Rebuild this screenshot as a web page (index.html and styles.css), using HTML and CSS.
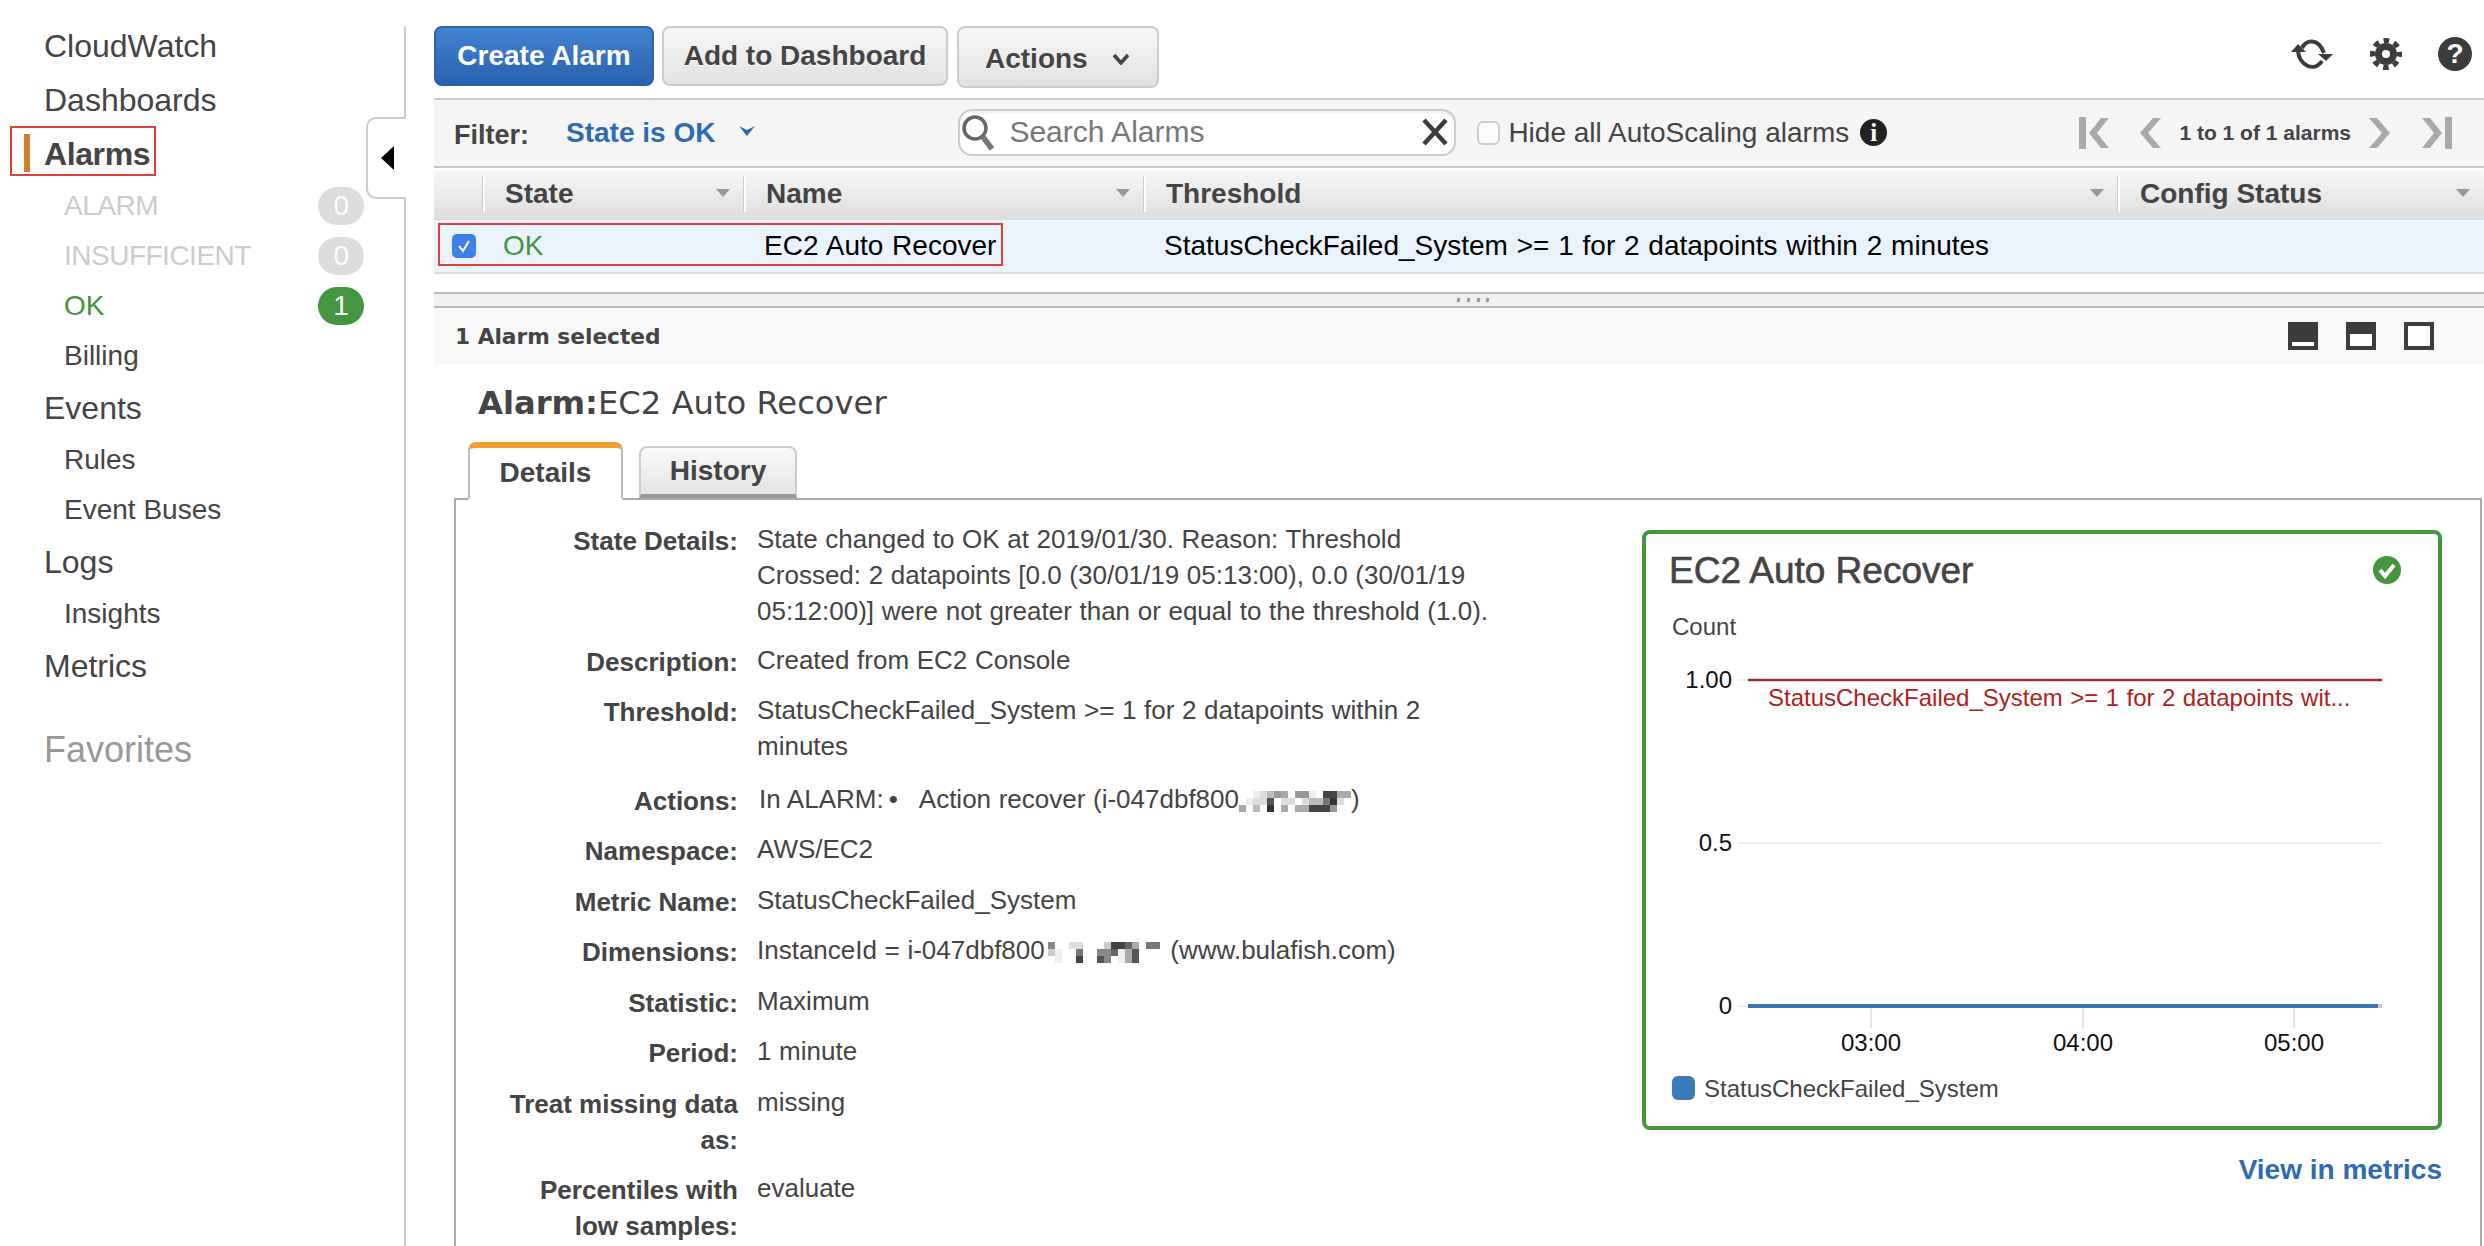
FILE: index.html
```html
<!DOCTYPE html>
<html>
<head>
    <meta name="viewport" content="width=device-width, initial-scale=1.0">
    <title>CloudWatch Alarms</title>
    <link rel="stylesheet" href="styles.css">
</head>
<body>
<div class="page">
    <div class="sidebar">
        <ul class="nav">
            <li class="nav-item">CloudWatch</li>
            <li class="nav-item">Dashboards</li>
            <li class="nav-item nav-active">Alarms</li>
            <li class="nav-sub nav-muted">ALARM <span class="badge">0</span></li>
            <li class="nav-sub nav-muted">INSUFFICIENT <span class="badge">0</span></li>
            <li class="nav-sub nav-ok">OK <span class="badge badge-ok">1</span></li>
            <li class="nav-sub">Billing</li>
            <li class="nav-item">Events</li>
            <li class="nav-sub">Rules</li>
            <li class="nav-sub">Event Buses</li>
            <li class="nav-item">Logs</li>
            <li class="nav-sub">Insights</li>
            <li class="nav-item">Metrics</li>
            <li class="nav-item nav-fav">Favorites</li>
        </ul>
        <div class="collapse-tab"><span class="collapse-arrow"></span></div>
    </div>

    <div class="main">
        <div class="toolbar">
            <button class="btn btn-primary">Create Alarm</button>
            <button class="btn btn-dash">Add to Dashboard</button>
            <button class="btn btn-actions">Actions
                <svg width="18" height="12" viewBox="0 0 18 12"><path d="M2 2 L9 10 L16 2" fill="none" stroke="#444" stroke-width="3.5"/></svg>
            </button>
            <div class="toolbar-icons">
                <svg width="44" height="34" viewBox="0 0 44 34">
                    <path d="M12 11 C16 3 28 0 34 16" fill="none" stroke="#3c3c3c" stroke-width="4"/>
                    <path d="M28 17 L43 17 L36 24 Z" fill="#3c3c3c"/>
                    <path d="M8 14 C9 28 24 36 32 24" fill="none" stroke="#3c3c3c" stroke-width="4"/>
                    <path d="M1 15 L16 15 L8 7 Z" fill="#3c3c3c"/>
                </svg>
                <svg width="32" height="32" viewBox="0 0 32 32">
                    <circle cx="16" cy="16" r="11" fill="#3c3c3c"/>
                    <circle cx="16" cy="16" r="13.5" fill="none" stroke="#3c3c3c" stroke-width="5" stroke-dasharray="5.6 5" stroke-dashoffset="2.8"/>
                    <circle cx="16" cy="16" r="4" fill="#fff"/>
                </svg>
                <span class="icon-help">?</span>
            </div>
        </div>

        <div class="filter-bar">
            <span class="filter-label">Filter:</span>
            <span class="filter-value">State is OK</span>
            <svg class="filter-chevron" width="18" height="12" viewBox="0 0 18 12"><path d="M1 1 L9 11 L17 1 L9 5 Z" fill="#2e6bb0"/></svg>
            <div class="search">
                <svg width="36" height="40" viewBox="0 0 36 40">
                    <circle cx="15" cy="16" r="11" fill="none" stroke="#666" stroke-width="3.5"/>
                    <path d="M23 25 L32 37" stroke="#777" stroke-width="5.5"/>
                </svg>
                <span class="search-text">Search Alarms</span>
                <svg class="search-clear" width="28" height="28" viewBox="0 0 28 28"><path d="M3 2 L25 26 M25 2 L3 26" stroke="#3c3c3c" stroke-width="4.5"/></svg>
            </div>
            <span class="check-empty"></span>
            <span class="hide-label">Hide all AutoScaling alarms</span>
            <span class="icon-info">i</span>
            <div class="pager">
                <svg width="30" height="32" viewBox="0 0 30 32"><path d="M0 0 H7 V32 H0 Z" fill="#aaa"/><path d="M22 1 L10 16 L22 31 L30 31 L18 16 L30 1 Z" fill="#aaa"/></svg>
                <svg class="pager-prev" width="22" height="32" viewBox="0 0 22 32"><path d="M14 1 L1 16 L14 31 L22 31 L9 16 L22 1 Z" fill="#aaa"/></svg>
                <span class="pager-text">1 to 1 of 1 alarms</span>
                <svg class="pager-next" width="22" height="32" viewBox="0 0 22 32"><path d="M8 1 L21 16 L8 31 L0 31 L13 16 L0 1 Z" fill="#aaa"/></svg>
                <svg class="pager-last" width="30" height="32" viewBox="0 0 30 32"><path d="M30 0 H23 V32 H30 Z" fill="#aaa"/><path d="M8 1 L20 16 L8 31 L0 31 L12 16 L0 1 Z" fill="#aaa"/></svg>
            </div>
        </div>

        <div class="table-head">
            <div class="th th-check"></div>
            <div class="th th-state">State<span class="sort"></span></div>
            <div class="th th-name">Name<span class="sort"></span></div>
            <div class="th th-threshold">Threshold<span class="sort"></span></div>
            <div class="th th-config">Config Status<span class="sort"></span></div>
        </div>
        <div class="table-row">
            <div class="td th-check"><span class="check-on"><svg width="14" height="14" viewBox="0 0 14 14"><path d="M2 7 L6 12 L12 2" fill="none" stroke="#fff" stroke-width="2"/></svg></span></div>
            <div class="td th-state td-ok">OK</div>
            <div class="td th-name">EC2 Auto Recover</div>
            <div class="td th-threshold">StatusCheckFailed_System &gt;= 1 for 2 datapoints within 2 minutes</div>
            <div class="td th-config"></div>
            <div class="row-mark"></div>
        </div>

        <div class="splitter">
            <svg class="grip" width="36" height="6" viewBox="0 0 36 6"><path d="M4 1 L3 5 M14 1 L13 5 M24 1 L23 5 M33 1 L32 5" stroke="#999" stroke-width="3"/></svg>
        </div>

        <div class="selected-bar">
            <span>1 Alarm selected</span>
            <div class="view-icons">
                <span class="view-icon view-bottom"></span>
                <span class="view-icon view-half"></span>
                <span class="view-icon view-full"></span>
            </div>
        </div>

        <h2 class="alarm-title"><b>Alarm:</b>EC2 Auto Recover</h2>

        <div class="tabs">
            <div class="tab tab-active">Details</div>
            <div class="tab">History</div>
        </div>

        <div class="tab-body">
            <dl class="details">
                <dt>State Details:</dt>
                <dd>State changed to OK at 2019/01/30. Reason: Threshold Crossed: 2 datapoints [0.0 (30/01/19 05:13:00), 0.0 (30/01/19 05:12:00)] were not greater than or equal to the threshold (1.0).</dd>
                <dt>Description:</dt>
                <dd>Created from EC2 Console</dd>
                <dt>Threshold:</dt>
                <dd>StatusCheckFailed_System &gt;= 1 for 2 datapoints within 2 minutes</dd>
                <dt class="row-action">Actions:</dt>
                <dd class="row-action dd-action">In ALARM:<span class="bullet">&bull;</span>Action recover (i-047dbf800<svg class="mosaic" width="112" height="21" viewBox="0 0 16 3" shape-rendering="crispEdges">
                    <rect x="0" y="0" width="16" height="3" fill="#fff"/>
                    <rect x="2" y="0" width="1" height="1" fill="#eee"/><rect x="3" y="0" width="1" height="1" fill="#ddd"/><rect x="4" y="0" width="1" height="1" fill="#bbb"/><rect x="5" y="0" width="1" height="1" fill="#999"/><rect x="6" y="0" width="1" height="1" fill="#aaa"/><rect x="8" y="0" width="2" height="1" fill="#999"/><rect x="10" y="0" width="1" height="1" fill="#eee"/><rect x="12" y="0" width="2" height="1" fill="#444"/><rect x="14" y="0" width="2" height="1" fill="#aaa"/>
                    <rect x="1" y="1" width="1" height="1" fill="#eee"/><rect x="2" y="1" width="2" height="1" fill="#ddd"/><rect x="4" y="1" width="1" height="1" fill="#555"/><rect x="6" y="1" width="2" height="1" fill="#ddd"/><rect x="9" y="1" width="1" height="1" fill="#ddd"/><rect x="10" y="1" width="2" height="1" fill="#bbb"/><rect x="12" y="1" width="1" height="1" fill="#777"/><rect x="13" y="1" width="1" height="1" fill="#333"/><rect x="14" y="1" width="1" height="1" fill="#ddd"/>
                    <rect x="0" y="2" width="1" height="1" fill="#aaa"/><rect x="2" y="2" width="1" height="1" fill="#bbb"/><rect x="4" y="2" width="1" height="1" fill="#333"/><rect x="6" y="2" width="1" height="1" fill="#aaa"/><rect x="8" y="2" width="2" height="1" fill="#aaa"/><rect x="10" y="2" width="3" height="1" fill="#444"/><rect x="13" y="2" width="1" height="1" fill="#999"/>
                </svg>)</dd>
                <dt>Namespace:</dt>
                <dd>AWS/EC2</dd>
                <dt>Metric Name:</dt>
                <dd>StatusCheckFailed_System</dd>
                <dt>Dimensions:</dt>
                <dd>InstanceId = i-047dbf800<svg class="mosaic" width="118" height="21" viewBox="0 0 16 3" shape-rendering="crispEdges">
                    <rect x="0" y="0" width="16" height="3" fill="#fff"/>
                    <rect x="0" y="0" width="1" height="1" fill="#888"/><rect x="3" y="0" width="1" height="1" fill="#ddd"/><rect x="4" y="0" width="1" height="1" fill="#ddd"/><rect x="8" y="0" width="1" height="1" fill="#ccc"/><rect x="9" y="0" width="2" height="1" fill="#444"/><rect x="11" y="0" width="1" height="1" fill="#666"/><rect x="12" y="0" width="1" height="1" fill="#aaa"/><rect x="14" y="0" width="2" height="1" fill="#777"/>
                    <rect x="0" y="1" width="1" height="1" fill="#ccc"/><rect x="1" y="1" width="1" height="1" fill="#eee"/><rect x="4" y="1" width="1" height="1" fill="#777"/><rect x="7" y="1" width="2" height="1" fill="#888"/><rect x="9" y="1" width="1" height="1" fill="#666"/><rect x="10" y="1" width="1" height="1" fill="#eee"/><rect x="11" y="1" width="1" height="1" fill="#aaa"/><rect x="12" y="1" width="1" height="1" fill="#555"/>
                    <rect x="1" y="2" width="1" height="1" fill="#eee"/><rect x="4" y="2" width="1" height="1" fill="#444"/><rect x="7" y="2" width="1" height="1" fill="#555"/><rect x="8" y="2" width="1" height="1" fill="#888"/><rect x="10" y="2" width="1" height="1" fill="#eee"/><rect x="11" y="2" width="1" height="1" fill="#aaa"/><rect x="12" y="2" width="1" height="1" fill="#555"/>
                </svg> (www.bulafish.com)</dd>
                <dt>Statistic:</dt>
                <dd>Maximum</dd>
                <dt>Period:</dt>
                <dd>1 minute</dd>
                <dt>Treat missing data as:</dt>
                <dd>missing</dd>
                <dt>Percentiles with low samples:</dt>
                <dd>evaluate</dd>
            </dl>

            <div class="chart-col">
                <div class="card">
                    <div class="card-head">
                        <span class="card-title">EC2 Auto Recover</span>
                        <svg class="card-status" width="28" height="28" viewBox="0 0 28 28"><circle cx="14" cy="14" r="14" fill="#43963f"/><path d="M7 14 L12 20 L21 9" fill="none" stroke="#fff" stroke-width="4"/></svg>
                    </div>
                    <svg class="chart" width="792" height="500" viewBox="0 0 792 500" font-family="Liberation Sans, Arial, sans-serif" font-size="24">
                        <text x="26" y="25" fill="#444">Count</text>
                        <text x="86" y="78" text-anchor="end" fill="#111">1.00</text>
                        <text x="86" y="241" text-anchor="end" fill="#111">0.5</text>
                        <text x="86" y="404" text-anchor="end" fill="#111">0</text>
                        <path d="M92 70 H102 M92 233 H736 M92 396 H102" stroke="#eee" stroke-width="2"/>
                        <path d="M225 398 V418 M437 398 V418 M648 398 V418" stroke="#e4e4e4" stroke-width="2"/>
                        <path d="M102 70 H736" stroke="#9e2f29" stroke-width="2.5"/>
                        <path d="M732 396 H736" stroke="#ccc" stroke-width="4"/>
                        <path d="M102 396 H732" stroke="#3a76b4" stroke-width="4"/>
                        <text x="122" y="96" fill="#b0211c" word-spacing="0.8">StatusCheckFailed_System &gt;= 1 for 2 datapoints wit...</text>
                        <text x="225" y="441" text-anchor="middle" fill="#111">03:00</text>
                        <text x="437" y="441" text-anchor="middle" fill="#111">04:00</text>
                        <text x="648" y="441" text-anchor="middle" fill="#111">05:00</text>
                        <rect x="26" y="466" width="23" height="24" rx="6" fill="#3a7ab8"/>
                        <text x="58" y="487" fill="#444">StatusCheckFailed_System</text>
                    </svg>
                </div>
                <a class="view-metrics">View in metrics</a>
            </div>
        </div>
    </div>
</div>
</body>
</html>
```

FILE: styles.css
```css
body {
    margin: 0;
    height: 1246px;
    overflow: hidden;
    background-color: #fff;
    color: #444;
    font-family: "Liberation Sans", Arial, sans-serif;
    font-size: 26px;
}

.page {
    display: flex;
    height: 1246px;
    overflow: hidden;
}

/* left nav */
.sidebar {
    position: relative;
    flex: 0 0 404px;
    margin-top: 26px;
    border-right: 2px solid #ccc;
}

.nav {
    list-style: none;
    margin: -7px 0 0;
    padding: 0;
}

.nav-item {
    height: 54px;
    line-height: 54px;
    padding-left: 44px;
    font-size: 32px;
}

.nav-active {
    position: relative;
    font-weight: bold;
    letter-spacing: -0.4px;
}

.nav-active::before {
    content: "";
    position: absolute;
    left: 24px;
    top: 7px;
    width: 6px;
    height: 38px;
    background-color: #d27d2d;
}

.nav-active::after {
    content: "";
    position: absolute;
    left: 10px;
    top: -1px;
    width: 142px;
    height: 46px;
    border: 2px solid #d9433c;
}

.nav-sub {
    display: flex;
    align-items: center;
    justify-content: space-between;
    height: 50px;
    padding-left: 64px;
    padding-right: 40px;
    font-size: 28px;
}

.nav-muted {
    color: #ccc;
    letter-spacing: -0.5px;
}

.nav-ok {
    color: #43963f;
}

.nav-fav {
    margin-top: 30px;
    color: #999;
    font-size: 36px;
}

.badge {
    width: 46px;
    height: 38px;
    line-height: 38px;
    border-radius: 19px;
    background-color: #ddd;
    color: #fff;
    font-size: 28px;
    text-align: center;
}

.badge-ok {
    background-color: #43963f;
}

.collapse-tab {
    position: absolute;
    top: 91px;
    right: -2px;
    width: 40px;
    height: 82px;
    box-sizing: border-box;
    display: flex;
    align-items: center;
    justify-content: center;
    background-color: #fff;
    border: 2px solid #ccc;
    border-right: none;
    border-radius: 10px 0 0 10px;
}

.collapse-arrow {
    border-style: solid;
    border-width: 12px 13px 12px 0;
    border-color: transparent #000 transparent transparent;
}

/* main column */
.main {
    flex: 1;
    min-width: 0;
    padding-top: 26px;
    margin-left: 28px;
}

.toolbar {
    display: flex;
    align-items: flex-start;
    gap: 8px;
    height: 72px;
}

.btn {
    height: 60px;
    padding: 0 20px;
    box-sizing: border-box;
    border: 2px solid #ccc;
    border-radius: 8px;
    background: linear-gradient(#f7f7f7, #e2e2e2);
    color: #444;
    font-family: inherit;
    font-size: 28px;
    font-weight: bold;
    text-shadow: 0 1px 0 #fff;
}

.btn-primary {
    width: 220px;
    padding: 0;
    border-color: #2a62ae;
    background: linear-gradient(#4383d2, #2862ae);
    color: #fff;
    text-shadow: none;
}

.btn-dash {
    width: 286px;
    padding: 0;
}

.btn-actions {
    display: flex;
    align-items: center;
    gap: 24px;
    width: 202px;
    height: 62px;
    margin-left: 1px;
    padding: 3px 0 0 26px;
}

.toolbar-icons {
    display: flex;
    align-items: center;
    gap: 36px;
    margin-left: auto;
    margin-right: 12px;
    height: 56px;
}

.icon-help {
    width: 34px;
    height: 34px;
    line-height: 34px;
    border-radius: 50%;
    background-color: #3c3c3c;
    color: #fff;
    font-size: 28px;
    font-weight: bold;
    text-align: center;
}

.filter-bar {
    display: flex;
    align-items: center;
    height: 66px;
    padding-left: 20px;
    border-top: 2px solid #ccc;
    border-bottom: 2px solid #ccc;
    background-color: #f5f5f5;
}

.filter-label {
    width: 112px;
    font-size: 27px;
    font-weight: bold;
    padding-top: 4px;
}

.filter-value {
    font-size: 28px;
    font-weight: bold;
    color: #2e6bb0;
}

.filter-chevron {
    margin-left: 23px;
    margin-bottom: 4px;
}

.search {
    display: flex;
    align-items: center;
    width: 498px;
    height: 47px;
    margin-left: 202px;
    margin-bottom: 2px;
    box-sizing: border-box;
    border: 2px solid #ccc;
    border-radius: 14px;
    background-color: #fff;
    box-shadow: inset 0 2px 3px #eee;
    color: #777;
    font-size: 30px;
}

.search-text {
    margin-left: 13px;
}

.search-clear {
    margin-left: auto;
    margin-right: 5px;
}

.check-empty {
    width: 23px;
    height: 24px;
    margin-left: 21px;
    box-sizing: border-box;
    border: 2px solid #ccc;
    border-radius: 6px;
    background-color: #fbfbfb;
}

.hide-label {
    margin-left: 8px;
    font-size: 28px;
}

.icon-info {
    width: 27px;
    height: 27px;
    margin-left: 11px;
    margin-bottom: 2px;
    line-height: 27px;
    border-radius: 50%;
    background-color: #222;
    color: #fff;
    font-family: "Liberation Serif", serif;
    font-size: 25px;
    font-weight: bold;
    text-align: center;
}

.pager {
    display: flex;
    align-items: center;
    margin-left: auto;
    margin-right: 32px;
}

.pager-prev {
    margin-left: 30px;
}

.pager-text {
    margin: 0 18px;
    font-size: 21px;
    font-weight: bold;
}

.pager-last {
    margin-left: 31px;
}

/* alarm table */
.table-head,
.table-row {
    position: relative;
    display: grid;
    grid-template-columns: 49px 261px 400px 974px 1fr;
    align-items: center;
}

.table-head {
    height: 48px;
    margin-top: 2px;
    border-bottom: 2px solid #ddd;
    background: linear-gradient(#f7f7f7, #dfdfdf);
    font-size: 28px;
    font-weight: bold;
}

.th {
    position: relative;
    height: 36px;
    line-height: 36px;
    padding-left: 22px;
}

.th:not(.th-check)::before {
    content: "";
    position: absolute;
    left: 0;
    top: 0;
    width: 2px;
    height: 36px;
    background-color: #fff;
    box-shadow: -1px 0 0 #ccc;
}

.sort {
    position: absolute;
    right: 14px;
    top: 13px;
    border-style: solid;
    border-width: 8px 7px 0;
    border-color: #999 transparent transparent;
}

.table-row {
    height: 52px;
    border-bottom: 2px solid #ddd;
    background-color: #eaf2fb;
    color: #000;
    font-size: 28px;
    word-spacing: 1px;
}

.td {
    padding-left: 20px;
    white-space: nowrap;
}

.td-ok {
    color: #43963f;
}

.td.th-check {
    padding-left: 18px;
    display: flex;
}

.check-on {
    display: flex;
    align-items: center;
    justify-content: center;
    width: 24px;
    height: 24px;
    border-radius: 5px;
    background-color: #3f7fe8;
}

.row-mark {
    position: absolute;
    left: 4px;
    top: 3px;
    width: 561px;
    height: 39px;
    border: 2px solid #d9433c;
}

.splitter {
    display: flex;
    align-items: center;
    justify-content: center;
    height: 12px;
    margin-top: 18px;
    border-top: 2px solid #bbb;
    border-bottom: 2px solid #bbb;
    background-color: #f0f0f0;
}

.grip {
    margin-left: 28px;
}

.selected-bar {
    display: flex;
    align-items: center;
    justify-content: space-between;
    height: 56px;
    padding-left: 21px;
    background-color: #f8f8f8;
    font-family: "DejaVu Sans", sans-serif;
    font-size: 21.7px;
    font-weight: bold;
}

.view-icons {
    display: flex;
    gap: 28px;
    margin-right: 50px;
}

.view-icon {
    position: relative;
    width: 30px;
    height: 28px;
    background-color: #3c3c3c;
}

.view-icon::after {
    content: "";
    position: absolute;
    left: 4px;
    right: 4px;
    bottom: 4px;
    background-color: #fff;
}

.view-bottom::after {
    height: 4px;
}

.view-half::after {
    height: 12px;
}

.view-full::after {
    top: 4px;
}

.alarm-title {
    margin: 20px 0 0 44px;
    height: 58px;
    line-height: 38px;
    font-family: "DejaVu Sans", sans-serif;
    font-size: 32.2px;
    font-weight: normal;
}

/* tabs */
.tabs {
    display: flex;
    align-items: flex-end;
    gap: 16px;
    margin-left: 34px;
}

.tab {
    display: flex;
    align-items: center;
    justify-content: center;
    width: 158px;
    height: 52px;
    box-sizing: border-box;
    border: 2px solid #ccc;
    border-bottom: 4px solid #999;
    border-radius: 8px 8px 0 0;
    background: linear-gradient(#f9f9f9, #e4e4e4);
    font-size: 28px;
    font-weight: bold;
}

.tab-active {
    position: relative;
    z-index: 1;
    width: 155px;
    height: 58px;
    margin-bottom: -2px;
    border-color: #f09d35 #bbb #fff;
    border-width: 6px 2px 2px;
    background: #fff;
}

.tab-body {
    display: flex;
    justify-content: space-between;
    margin-left: 20px;
    margin-right: 2px;
    padding: 21px 38px 0 0;
    height: 800px;
    border: 2px solid #aaa;
}

.details {
    display: grid;
    grid-template-columns: 282px 734px;
    column-gap: 19px;
    row-gap: 12.5px;
    align-content: start;
    margin: 0;
    line-height: 36px;
}

.details dt {
    padding-top: 2px;
    padding-left: 44px;
    font-weight: bold;
    text-align: right;
}

.details dd {
    margin: 0;
    word-spacing: 0.4px;
}

.details .row-action {
    margin-top: 4px;
}

.bullet {
    margin: 0 21px 0 5px;
}

.dd-action {
    padding-left: 2px;
}

.mosaic {
    vertical-align: -4px;
}

.chart-col {
    width: 800px;
}

.card {
    margin-top: 9px;
    height: 600px;
    box-sizing: border-box;
    border: 4px solid #43963f;
    border-radius: 8px;
}

.card-head {
    display: flex;
    align-items: center;
    justify-content: space-between;
    height: 76px;
    padding: 0 37px 2px 23px;
    box-sizing: border-box;
}

.card-status {
    margin-bottom: 3px;
}

.card-title {
    font-size: 37px;
    -webkit-text-stroke: 0.6px #444;
}

.chart {
    display: block;
}

.view-metrics {
    display: block;
    margin-top: 24px;
    color: #2e6bb0;
    font-size: 28px;
    font-weight: bold;
    text-align: right;
}
```
